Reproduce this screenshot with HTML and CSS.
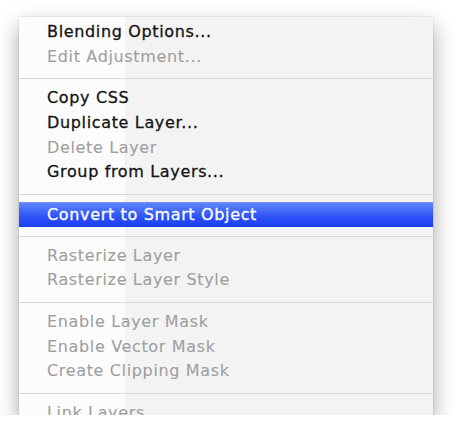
FILE: index.html
```html
<!DOCTYPE html>
<html lang="en">
<head>
  <meta charset="UTF-8">
  <title>Layer context menu</title>
  <link rel="stylesheet" href="styles.css">
</head>
<body>
  <div class="menu">
    <div class="item">Blending Options...</div>
    <div class="item off">Edit Adjustment...</div>
    <div class="sep"></div>
    <div class="item">Copy CSS</div>
    <div class="item">Duplicate Layer...</div>
    <div class="item off">Delete Layer</div>
    <div class="item">Group from Layers...</div>
    <div class="sep"></div>
    <div class="item active">Convert to Smart Object</div>
    <div class="sep"></div>
    <div class="item off">Rasterize Layer</div>
    <div class="item off">Rasterize Layer Style</div>
    <div class="sep"></div>
    <div class="item off">Enable Layer Mask</div>
    <div class="item off">Enable Vector Mask</div>
    <div class="item off">Create Clipping Mask</div>
    <div class="sep"></div>
    <div class="item off">Link Layers</div>
  </div>
</body>
</html>
```

FILE: styles.css
```css
:root{--txt:#141414;--off:#9f9f9f;--line:#d9d9d9}
*{box-sizing:border-box;margin:0;padding:0}
body{background:#fff;font-family:'DejaVu Sans',sans-serif}
.menu{
  margin:17px 0 0 19px;
  width:414px;
  height:398px;
  overflow:hidden;
  padding-top:3px;
  background:linear-gradient(90deg,#fcfcfc 0,#fcfcfc 106px,#f3f3f3 106px);
  box-shadow:0 9px 20px rgba(0,0,0,.35),0 0 2px rgba(0,0,0,.15);
}
.item{
  height:24.66px;
  line-height:24.66px;
  padding-left:28px;
  font-size:16px;
  letter-spacing:.65px;
  color:var(--txt);
  white-space:nowrap;
  -webkit-text-stroke:.3px currentColor;
}
.item.off{color:var(--off);-webkit-text-stroke:.1px currentColor}
.item.active{
  color:#fff;
  background:linear-gradient(#5f85f8,#2b50f6 60%,#1a3ff4);
  border-top:1px solid #6d8ff9;
}
.sep{height:17px;padding-top:9px}
.sep::before{content:"";display:block;height:1px;background:var(--line)}
```
